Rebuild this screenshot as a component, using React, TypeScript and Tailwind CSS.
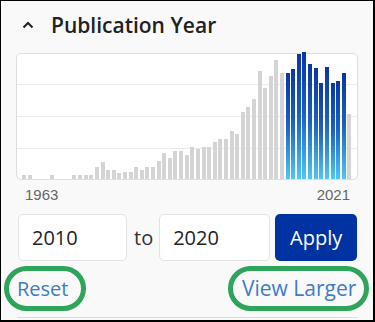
import React from 'react';

// bar heights in px, one per year from 1963 to 2021
const heights = [
  4, 4, 0, 0, 0, 4, 0, 0, 0, 4, 4, 4, 4, 12, 17, 9, 9, 6, 7, 7, 12, 9, 12, 12, 18, 26, 21, 28, 28, 24,
  32, 30, 32, 32, 37, 40, 40, 48, 45, 67, 72, 80, 108, 91, 103, 119, 106, 106, 110, 125, 127, 115, 111,
  96, 112, 96, 98, 106, 65,
];

const START = 1963;
const FROM = 2010;
const TO = 2020;

const Chevron = () => (
  <svg width="12" height="8" viewBox="0 0 12 8" className="text-[#222]">
    <polyline points="1.5,6.5 6,2 10.5,6.5" fill="none" stroke="currentColor" strokeWidth="2" />
  </svg>
);

const Chart = () => (
  <div className="relative h-[127px] rounded-[5px] border border-[#dedede] bg-white">
    {/* grid lines */}
    <div className="h-[31px] border-b border-[#ececec]" />
    <div className="h-[32px] border-b border-[#ececec]" />
    <div className="h-[32px] border-b border-[#ececec]" />

    {/* bars */}
    <div className="absolute inset-0 flex items-end justify-between px-[5px]">
      {heights.map((h, i) => {
        const year = START + i;
        const selected = year >= FROM && year <= TO;
        return (
          <div
            key={year}
            className={
              selected
                ? 'w-[4px] bg-linear-to-b from-[#0a36a3] via-[#1d62c2] to-[#52c6f2]'
                : 'w-[4px] bg-[#d4d4d4]'
            }
            style={{ height: h }}
          />
        );
      })}
    </div>
  </div>
);

export default function App() {
  return (
    <div
      className="h-[322px] w-[375px] overflow-hidden border-t border-l border-r-2 border-b-2 border-black bg-[#f9f9f9] text-[#222]"
      style={{ fontFamily: '"Open Sans", "Noto Sans", sans-serif' }}
    >
      <div className="flex items-center gap-[17px] pl-[21px] pt-[10px]">
        <Chevron />
        <h2 className="text-[21px] font-semibold leading-[28px]">Publication Year</h2>
      </div>

      <div className="mt-[14px] px-[15px]">
        <Chart />

        <div
          className="mt-[6px] flex justify-between pl-[9px] pr-[8px] text-[15px] leading-[17px] text-[#666]"
          style={{ fontFamily: '"Liberation Sans", Arial, sans-serif' }}
        >
          <span>1963</span>
          <span>2021</span>
        </div>
      </div>

      <div className="mt-[11px] flex items-center pl-[17px]">
        <div className="flex h-[47px] w-[109px] items-center rounded-[5px] border border-[#e2e2e2] bg-white pl-[13px] text-[20px]">
          2010
        </div>
        <span className="ml-[7px] mr-[6px] text-[20px] text-[#333]">to</span>
        <div className="flex h-[47px] w-[111px] items-center rounded-[5px] border border-[#e2e2e2] bg-white pl-[13px] text-[20px]">
          2020
        </div>
        <button className="ml-[5px] flex h-[47px] w-[82px] items-center justify-center rounded-[5px] bg-[#0033a1] text-[20px] text-white">
          Apply
        </button>
      </div>

      <div className="mt-[5px] flex items-center justify-between pl-[3px] pr-[4px]">
        <a className="flex h-[45px] w-[82px] items-center rounded-full border-[5px] border-[#2ea55a] pl-[8px] text-[20px] text-[#3d7cc9]">
          Reset
        </a>
        <a className="flex h-[45px] w-[141px] items-center rounded-full border-[5px] border-[#2ea55a] pl-[9px] text-[21px] text-[#3d7cc9]">
          View Larger
        </a>
      </div>

      <div className="mx-[16px] mt-[6px] h-px bg-[#dcdcdc]" />
    </div>
  );
}
